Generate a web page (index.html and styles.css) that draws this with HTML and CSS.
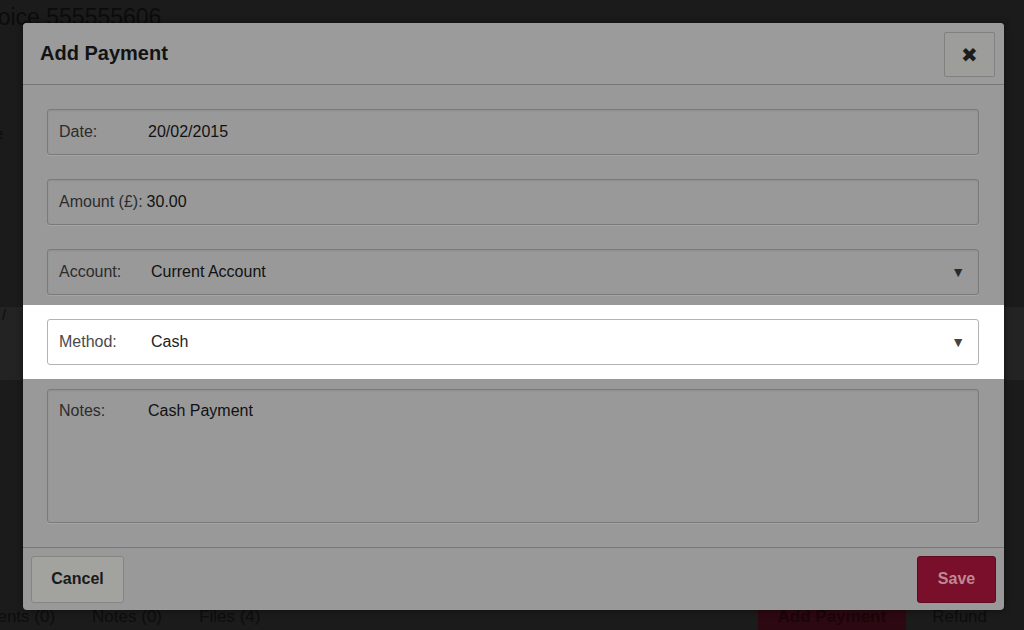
FILE: index.html
```html
<!DOCTYPE html>
<html lang="en">
<head>
    <meta charset="UTF-8">
    <meta name="viewport" content="width=device-width, initial-scale=1.0">
    <title>Add Payment</title>
    <link rel="stylesheet" href="styles.css">
</head>
<body>
    <div class="page">
        <h1 class="invoice-title">Invoice 555555606</h1>
        <p class="invoice-line">Due Date</p>
        <div class="table-row"><span>/</span></div>
        <div class="page-tabs">
            <span class="tab">Payments (0)</span>
            <span class="tab">Notes (0)</span>
            <span class="tab">Files (4)</span>
            <span class="tab-spacer"></span>
            <span class="page-button">Add Payment</span>
            <span class="tab">Refund</span>
        </div>
    </div>

    <div class="modal">
        <div class="modal-header">
            <h2>Add Payment</h2>
            <button type="button" class="close-button">&#10006;</button>
        </div>

        <form class="modal-body">
            <div class="field">
                <label>Date:</label>
                <span class="value">20/02/2015</span>
            </div>
            <div class="field">
                <label class="wide">Amount (&pound;):</label>
                <span class="value">30.00</span>
            </div>
            <div class="field select">
                <label>Account:</label>
                <span class="value">Current Account</span>
                <span class="arrow">&#9660;</span>
            </div>
            <div class="highlight">
                <div class="field select">
                    <label>Method:</label>
                    <span class="value">Cash</span>
                    <span class="arrow">&#9660;</span>
                </div>
            </div>
            <div class="field notes">
                <label>Notes:</label>
                <span class="value">Cash Payment</span>
            </div>
        </form>

        <div class="modal-footer">
            <button type="button" class="cancel">Cancel</button>
            <button type="button" class="save">Save</button>
        </div>
    </div>
</body>
</html>
```

FILE: styles.css
```css
* {
    box-sizing: border-box;
}
body {
    margin: 0;
    font-family: 'Liberation Sans', Helvetica, Arial, sans-serif;
    font-size: 16px;
    background-color: #1b1b1b;
    overflow: hidden;
}
.page {
    height: 630px;
    position: relative;
    display: flex;
    flex-direction: column;
}
.invoice-title {
    margin: 0;
    margin-left: -33px;
    padding-top: 4px;
    font-size: 23px;
    font-weight: normal;
    color: #0c0c0c;
}
.invoice-line {
    margin: 0;
    margin-top: 94px;
    margin-left: -60px;
    font-size: 15px;
    color: #0c0c0c;
}
.table-row {
    margin-top: 165px;
    height: 73px;
    flex-shrink: 0;
    background: #232323;
    color: #0c0c0c;
    font-size: 14px;
    padding-left: 2px;
}
.page-tabs {
    margin-top: auto;
    height: 26px;
    display: flex;
    align-items: center;
    font-size: 17px;
    color: #0d0d0d;
    margin-left: -46px;
}
.tab {
    margin-right: 37px;
}
.tab-spacer {
    flex: 1;
}
.page-button {
    background: #2c0812;
    color: #1a0509;
    font-weight: bold;
    height: 26px;
    line-height: 26px;
    padding: 0 20px;
    margin-right: 26px;
}
.modal {
    position: absolute;
    top: 23px;
    left: 23px;
    width: 981px;
    height: 587px;
    background: #999;
    border-radius: 4px;
    box-shadow: 0 0 6px rgba(0, 0, 0, 0.5);
    display: flex;
    flex-direction: column;
}
.modal-header {
    height: 62px;
    flex-shrink: 0;
    border-bottom: 1px solid #777;
    display: flex;
    align-items: center;
    padding: 0 9px 0 17px;
    background: #9b9b9b;
    border-radius: 4px 4px 0 0;
}
.modal-header h2 {
    flex: 1;
    margin: 0;
    font-size: 20px;
    font-weight: bold;
    color: #131313;
}
.close-button {
    width: 51px;
    height: 45px;
    margin-top: 2px;
    background: #9d9d99;
    border: 1px solid #818181;
    border-radius: 2px;
    font-size: 20px;
    color: #1c1c1c;
    padding: 0;
    cursor: pointer;
}
.modal-body {
    flex-shrink: 0;
    padding: 24px 25px 24px 24px;
    display: flex;
    flex-direction: column;
    gap: 24px;
    border-bottom: 1px solid #777;
}
.field {
    height: 46px;
    border: 1px solid #7a7a7a;
    border-radius: 3px;
    box-shadow: inset 0 1px 2px rgba(0, 0, 0, 0.08), 0 1px 0 rgba(255, 255, 255, 0.12);
    display: flex;
    align-items: center;
    padding: 0 11px;
    color: #333;
}
.field label {
    width: 89px;
    flex-shrink: 0;
    color: #2c2c2c;
}
.field label.wide {
    width: auto;
    margin-right: 4px;
}
.field .value {
    flex: 1;
    color: #111;
}
.field.select .value {
    padding-left: 3px;
}
.arrow {
    font-size: 14px;
    color: #2a2a2a;
    margin-right: 2px;
}
.field.notes {
    height: 134px;
    align-items: flex-start;
    padding-top: 12px;
}
.highlight {
    background: #fff;
    margin: -14px -25px -14px -24px;
    padding: 14px 25px 14px 24px;
}
.highlight .field {
    border-color: #b3b3b3;
    box-shadow: none;
}
.highlight .field label {
    color: #4a4a4a;
}
.highlight .field .value {
    color: #222;
}
.highlight .arrow {
    color: #444;
}
.modal-footer {
    flex: 1;
    display: flex;
    justify-content: space-between;
    align-items: center;
    padding: 0 8px;
}
.modal-footer button {
    height: 47px;
    font-size: 16px;
    font-weight: bold;
    font-family: 'Liberation Sans', Helvetica, Arial, sans-serif;
    border-radius: 3px;
    cursor: pointer;
}
.cancel {
    width: 93px;
    background: #a2a29e;
    border: 1px solid #858582;
    color: #1a1a1a;
}
.save {
    width: 79px;
    background: #7a0f2b;
    border: 1px solid #5e0b22;
    color: #c08896;
}
```
